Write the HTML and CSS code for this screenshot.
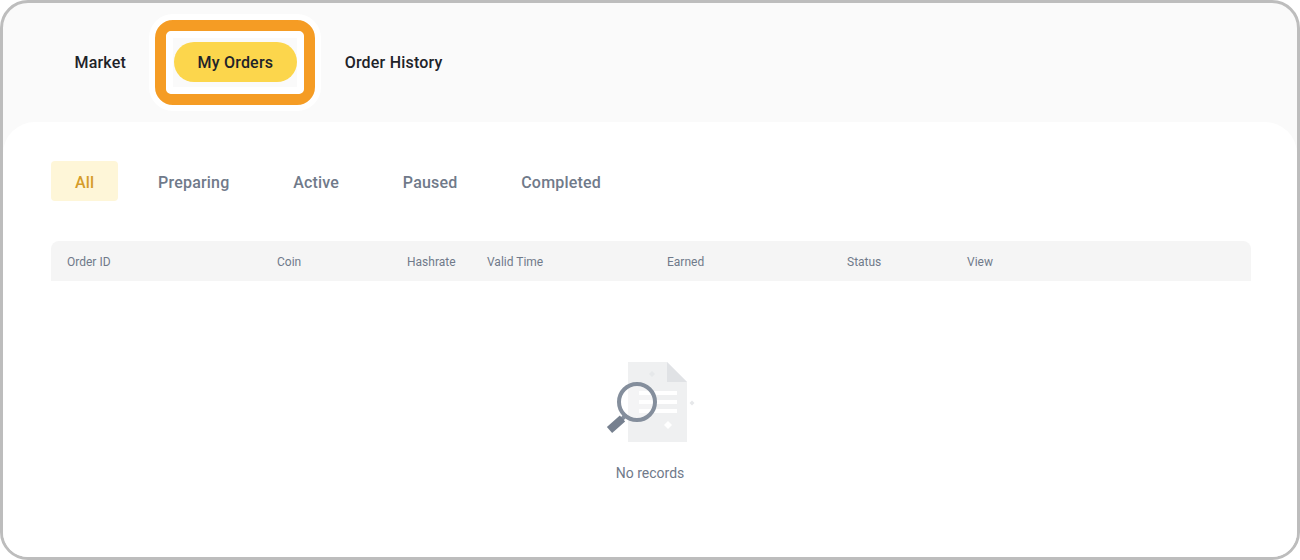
FILE: index.html
```html
<!DOCTYPE html>
<html lang="en">
<head>
<meta charset="utf-8">
<title>My Orders</title>
<link rel="stylesheet" href="styles.css">
</head>
<body>
<div class="frame">
  <nav class="nav">
    <a class="nav-tab">Market</a>
    <a class="nav-tab nav-tab-active">My Orders<span class="ring"></span></a>
    <a class="nav-tab">Order History</a>
  </nav>
  <main class="card">
    <div class="filters">
      <a class="filter filter-active">All</a>
      <a class="filter">Preparing</a>
      <a class="filter">Active</a>
      <a class="filter">Paused</a>
      <a class="filter">Completed</a>
    </div>
    <div class="thead">
      <div class="th col-id">Order ID</div>
      <div class="th col-coin">Coin</div>
      <div class="th col-hash">Hashrate</div>
      <div class="th col-time">Valid Time</div>
      <div class="th col-earned">Earned</div>
      <div class="th col-status">Status</div>
      <div class="th col-view">View</div>
    </div>
    <div class="empty">
      <svg class="empty-icon" width="96" height="96" viewBox="0 0 96 96" aria-hidden="true">
        <path d="M26 4H65L85 24V84H26Z" fill="#eff0f1"/>
        <path d="M65 4L85 24H65Z" fill="#e0e2e5"/>
        <path d="M50 13l3 3-3 3-3-3Z" fill="#e6e8ea"/>
        <path d="M90 42.500l2.500 2.500-2.500 2.500-2.500-2.500Z" fill="#e6e8ea"/>
        <path d="M66 63l4 4-4 4-4-4Z" fill="#fff"/>
        <rect x="37" y="33" width="38" height="4" fill="#fff"/>
        <rect x="37" y="42" width="38" height="4" fill="#fff"/>
        <rect x="37" y="51" width="38" height="4" fill="#fff"/>
        <circle cx="35" cy="44" r="18" fill="#fff" fill-opacity=".3" stroke="#848e9c" stroke-width="4"/>
        <path d="M23.500 57.500L19 62" stroke="#848e9c" stroke-width="4" fill="none"/>
        <path d="M20.500 60.500L7.500 72" stroke="#76808f" stroke-width="8" fill="none"/>
      </svg>
      <p class="empty-text">No records</p>
    </div>
  </main>
</div>
</body>
</html>
```

FILE: styles.css
```css
* { box-sizing: border-box; }
html, body { margin: 0; height: 100%; background: #fff; }
body { font-family: Roboto, "Liberation Sans", sans-serif; }
.frame {
  width: 1300px;
  height: 560px;
  border: 3px solid #bdbdbd;
  border-radius: 28px;
  background: #fafafa;
  overflow: hidden;
  display: flex;
  flex-direction: column;
}
.nav {
  height: 119px;
  flex: none;
  display: flex;
  align-items: flex-start;
  gap: 23.5px;
  padding: 39px 0 0 47.5px;
}
.nav-tab {
  position: relative;
  height: 40px;
  padding: 0 24px;
  border-radius: 20px;
  font-size: 16px;
  font-weight: 500;
  letter-spacing: .2px;
  line-height: 42px;
  color: #1e2329;
}
.nav-tab-active { background: #fcd64c; }
.ring {
  position: absolute;
  left: -19px;
  top: -22px;
  width: 160px;
  height: 85px;
  border: 11px solid #f59c24;
  border-radius: 18px;
  box-shadow: 0 0 0 6px #fff;
}
.ring::before {
  content: "";
  position: absolute;
  inset: 0;
  border: 7px solid #fff;
  border-radius: 5px;
}
.card {
  flex: 1;
  background: #fff;
  border-radius: 32px 32px 0 0;
  padding: 39px 46px 0 48px;
  display: flex;
  flex-direction: column;
}
.filters { display: flex; gap: 15.7px; }
.filter {
  height: 40px;
  padding: 0 24px;
  border-radius: 4px;
  font-size: 16px;
  font-weight: 500;
  letter-spacing: .2px;
  line-height: 43px;
  color: #707a8a;
}
.filter-active { background: #fef6d8; color: #d59c2a; }
.thead {
  margin-top: 40px;
  height: 40px;
  display: flex;
  background: #f5f5f5;
  border-radius: 8px 8px 0 0;
}
.th { padding-left: 16px; font-size: 12px; line-height: 42px; color: #707a8a; }
.col-id { width: 210px; }
.col-coin { width: 130px; }
.col-hash { width: 80px; }
.col-time, .col-earned { width: 180px; }
.col-status { width: 120px; }
.col-view { flex: 1; }
.empty {
  display: flex;
  flex-direction: column;
  align-items: center;
  margin-top: 77px;
  padding-right: 2px;
}
.empty-icon { overflow: visible; }
.empty-text {
  margin: 9px 0 0;
  font-size: 14px;
  line-height: 20px;
  color: #707a8a;
}
```
